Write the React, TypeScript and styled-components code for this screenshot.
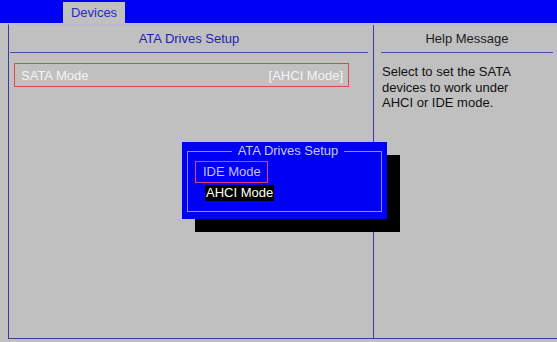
import React from "react";
import styled, { createGlobalStyle } from "styled-components";

const Global = createGlobalStyle`
  html, body { margin: 0; padding: 0; }
  body {
    width: 557px; height: 342px; overflow: hidden;
    background: #c0c0c0;
    font-family: "Liberation Sans", Arial, sans-serif;
    font-size: 13px;
  }
`;

const Screen = styled.div`
  position: relative;
  width: 557px;
  height: 342px;
  background: #c0c0c0;
`;

const TopBar = styled.div`
  height: 23px;
  background: #0000f6;
  display: flex;
  align-items: flex-end;
  padding-left: 63px;
  box-sizing: border-box;
`;

const Tab = styled.div`
  width: 62px;
  height: 21px;
  background: #c0c0c0;
  color: #2828c8;
  display: flex;
  align-items: center;
  justify-content: center;
`;

const Frame = styled.div`
  margin: 1px 0 0 8px;
  height: 315px;
  box-sizing: border-box;
  border-left: 1px solid #3a3aa4;
  border-bottom: 1px solid #3a3aa4;
  border-top: 1px solid #b8b8d8;
  display: grid;
  grid-template-columns: 364px 1px 1fr;
`;

const Divider = styled.div`
  background: #3a3aa4;
`;

const Panel = styled.div`
  display: flex;
  flex-direction: column;
`;

const Header = styled.div<{ $left: number; $right: number; $color: string }>`
  height: 27px;
  display: flex;
  align-items: center;
  justify-content: center;
  color: ${(p) => p.$color};
  margin: 0 ${(p) => p.$right}px 0 ${(p) => p.$left}px;
  border-bottom: 1px solid #4a4ab0;
`;

const Row = styled.div`
  margin: 10px 24px 0 5px;
  height: 24px;
  box-sizing: border-box;
  border: 1px solid #e04848;
  display: flex;
  align-items: center;
  justify-content: space-between;
  padding: 0 5px 0 6px;
  color: #f4f4f4;
`;

const HelpText = styled.div`
  margin: 11px 8px 0 8px;
  line-height: 15.5px;
  color: #101010;
`;

const Dialog = styled.div`
  position: absolute;
  left: 182px;
  top: 142px;
  width: 205px;
  height: 77px;
  background: #0000f4;
  box-shadow: 13px 13px 0 #000;
  box-sizing: border-box;
  padding: 2px 5px 7px 5px;
  display: flex;
`;

const Box = styled.fieldset`
  flex: 1;
  margin: 0;
  padding: 3px 0 0 7px;
  border: 1px solid #8c8cf0;
  display: flex;
  flex-direction: column;
  align-items: flex-start;
`;

const Legend = styled.legend`
  margin: 0 auto;
  padding: 0 6px;
  color: #c8c8ff;
  line-height: 14px;
`;

const Option = styled.div<{ $selected?: boolean; $focused?: boolean }>`
  box-sizing: border-box;
  line-height: ${(p) => (p.$focused ? "20px" : "16px")};
  padding: ${(p) => (p.$focused ? "0 6px 0 7px" : "0 1px")};
  margin-left: ${(p) => (p.$focused ? "0" : "10px")};
  margin-top: ${(p) => (p.$focused ? "0" : "2px")};
  border: ${(p) => (p.$focused ? "1px solid #e04080" : "none")};
  background: ${(p) => (p.$selected ? "#000" : "transparent")};
  color: ${(p) => (p.$selected ? "#fff" : "#c0c0ff")};
`;

export default function App() {
  return (
    <Screen>
      <Global />
      <TopBar>
        <Tab>Devices</Tab>
      </TopBar>
      <Frame>
        <Panel>
          <Header $left={1} $right={5} $color="#2020b8">ATA Drives Setup</Header>
          <Row>
            <span>SATA Mode</span>
            <span>[AHCI Mode]</span>
          </Row>
        </Panel>
        <Divider />
        <Panel>
          <Header $left={7} $right={4} $color="#202020">Help Message</Header>
          <HelpText>
            Select to set the SATA
            <br />
            devices to work under
            <br />
            AHCI or IDE mode.
          </HelpText>
        </Panel>
      </Frame>
      <Dialog>
        <Box>
          <Legend>ATA Drives Setup</Legend>
          <Option $focused>IDE Mode</Option>
          <Option $selected>AHCI Mode</Option>
        </Box>
      </Dialog>
    </Screen>
  );
}
